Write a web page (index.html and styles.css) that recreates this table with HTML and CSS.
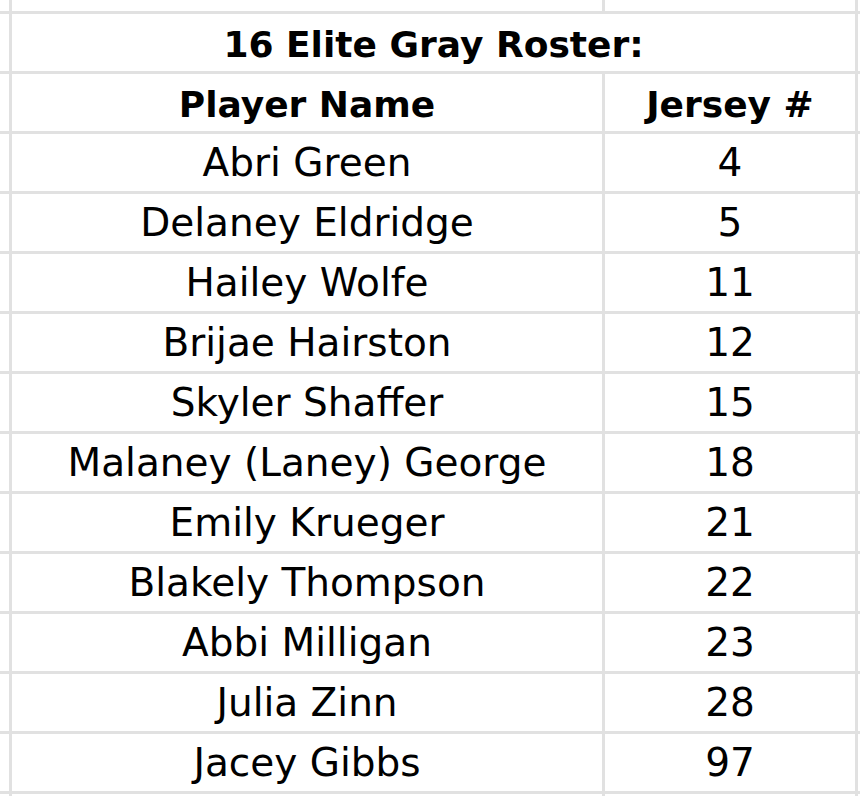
FILE: index.html
```html
<!DOCTYPE html>
<html>
<head>
<meta charset="utf-8">
<link rel="stylesheet" href="styles.css">
</head>
<body>
<div class="sheet">
  <div class="c"></div><div class="c"></div><div class="c"></div><div class="c"></div>

  <div class="c"></div><div class="c title span">16 Elite Gray Roster:</div><div class="c"></div>

  <div class="c"></div><div class="c head">Player Name</div><div class="c head">Jersey #</div><div class="c"></div>

  <div class="c"></div><div class="c">Abri Green</div><div class="c">4</div><div class="c"></div>
  <div class="c"></div><div class="c">Delaney Eldridge</div><div class="c">5</div><div class="c"></div>
  <div class="c"></div><div class="c">Hailey Wolfe</div><div class="c">11</div><div class="c"></div>
  <div class="c"></div><div class="c">Brijae Hairston</div><div class="c">12</div><div class="c"></div>
  <div class="c"></div><div class="c">Skyler Shaffer</div><div class="c">15</div><div class="c"></div>
  <div class="c"></div><div class="c">Malaney (Laney) George</div><div class="c">18</div><div class="c"></div>
  <div class="c"></div><div class="c">Emily Krueger</div><div class="c">21</div><div class="c"></div>
  <div class="c"></div><div class="c">Blakely Thompson</div><div class="c">22</div><div class="c"></div>
  <div class="c"></div><div class="c">Abbi Milligan</div><div class="c">23</div><div class="c"></div>
  <div class="c"></div><div class="c">Julia Zinn</div><div class="c">28</div><div class="c"></div>
  <div class="c"></div><div class="c">Jacey Gibbs</div><div class="c">97</div><div class="c"></div>

  <div class="c"></div><div class="c"></div><div class="c"></div><div class="c"></div>
</div>
</body>
</html>
```
FILE: styles.css
```css
html, body {
  margin: 0;
  padding: 0;
  background: #ffffff;
}
.sheet {
  width: 860px;
  height: 796px;
  display: grid;
  grid-template-columns: 9px 590px 250px 2px;
  grid-template-rows: 11px repeat(13, 57px) 2px;
  gap: 3px;
  background: #e1e1e1;
  overflow: hidden;
  font-family: "DejaVu Sans", sans-serif;
  font-size: 39px;
  color: #000000;
}
.c {
  background: #ffffff;
  display: flex;
  align-items: flex-end;
  justify-content: center;
  padding-bottom: 9px;
  box-sizing: border-box;
  white-space: nowrap;
  line-height: 1;
  overflow: hidden;
}
.span {
  grid-column: span 2;
}
.title, .head {
  font-weight: 700;
  font-size: 36px;
  padding-bottom: 8px;
}
```
